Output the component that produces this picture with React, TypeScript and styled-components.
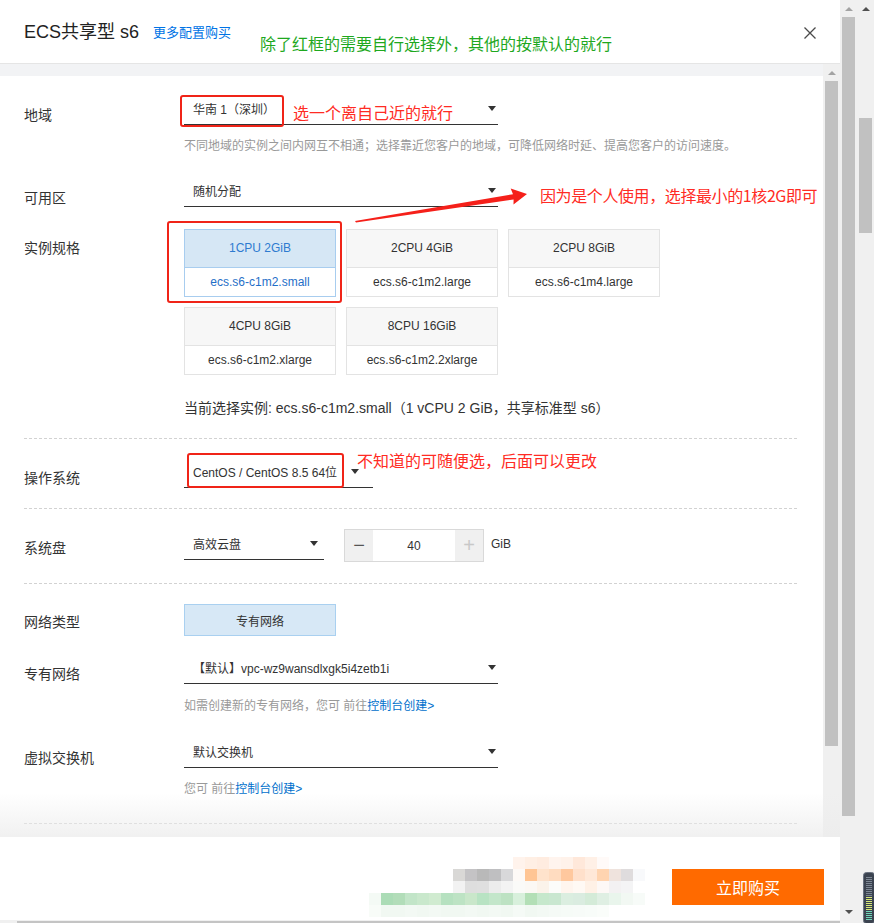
import React from 'react';
import styled, { createGlobalStyle } from 'styled-components';

const GlobalStyle = createGlobalStyle`
  html, body { margin: 0; padding: 0; background: #fff; }
  body {
    font-family: "Liberation Sans", "Noto Sans CJK SC", sans-serif;
    color: #333;
  }
  * { box-sizing: border-box; }
`;

const Page = styled.div`
  display: flex;
  width: 874px;
  height: 923px;
  overflow: hidden;
`;

const Modal = styled.div`
  width: 840px;
  height: 923px;
  display: flex;
  flex-direction: column;
  background: #fff;
`;

const Header = styled.header`
  height: 64px;
  flex-shrink: 0;
  display: flex;
  align-items: center;
  padding: 0 24px;
  border-bottom: 1px solid #e5e5e5;
`;

const Title = styled.h1`
  margin: 0;
  font-size: 18px;
  font-weight: normal;
  color: #222;
  line-height: 1;
`;

const HeaderLink = styled.a`
  margin-left: 14px;
  font-size: 13px;
  color: #0073e5;
  text-decoration: none;
`;

const GreenNote = styled.span`
  margin-left: 29px;
  transform: translateY(11px);
  font-family: "Noto Sans CJK SC", sans-serif;
  font-size: 16px;
  color: #1ea81e;
  white-space: nowrap;
`;

const CloseButton = styled.button`
  margin-left: auto;
  width: 12px;
  height: 12px;
  padding: 0;
  border: 0;
  background: none;
  display: flex;
  transform: translateY(1px);
`;

const Body = styled.div`
  position: relative;
  height: 773px;
  display: flex;
`;

const BodyMain = styled.div`
  flex: 1;
  display: flex;
  flex-direction: column;
  background: #f2f3f5;
  padding-top: 12px;
`;

const Content = styled.div`
  flex: 1;
  background: #fff;
  overflow: hidden;
  padding: 17px 25px 0 24px;
`;

const Fade = styled.div`
  position: absolute;
  left: 0;
  right: 0;
  bottom: 0;
  height: 44px;
  pointer-events: none;
  background: linear-gradient(rgba(240, 240, 240, 0), rgba(236, 236, 236, 0.75));
`;

const Row = styled.div<{ $mt: number }>`
  display: grid;
  grid-template-columns: 160px 1fr;
  margin-top: ${p => p.$mt}px;
`;

const Label = styled.div<{ $pt: number }>`
  padding-top: ${p => p.$pt}px;
  font-size: 14px;
  line-height: 20px;
  color: #333;
`;

const Field = styled.div<{ $row?: boolean }>`
  position: relative;
  display: flex;
  flex-direction: ${p => (p.$row ? 'row' : 'column')};
  align-items: flex-start;
`;

const Select = styled.div<{ $w: number; $cr: number }>`
  width: ${p => p.$w}px;
  height: 32px;
  display: flex;
  align-items: center;
  padding: 0 ${p => p.$cr}px 1px 9px;
  border-bottom: 1px solid #333;
  font-size: 12px;
  color: #333;
  white-space: nowrap;
`;

const Caret = styled.span`
  margin-left: auto;
  width: 0;
  height: 0;
  border-left: 4px solid transparent;
  border-right: 4px solid transparent;
  border-top: 5px solid #333;
`;

const Help = styled.div<{ $mt: number }>`
  margin-top: ${p => p.$mt}px;
  font-size: 12px;
  line-height: 18px;
  color: #999;
  white-space: nowrap;
`;

const HelpLink = styled.a`
  color: #0070cc;
  text-decoration: none;
`;

const RedBox = styled.div<{ $l: number; $t: number; $w: number; $h: number }>`
  position: absolute;
  left: ${p => p.$l}px;
  top: ${p => p.$t}px;
  width: ${p => p.$w}px;
  height: ${p => p.$h}px;
  border: 2.5px solid #f02418;
  border-radius: 3px;
  pointer-events: none;
`;

const Note = styled.span<{ $l: number; $t: number; $tight?: boolean }>`
  position: absolute;
  left: ${p => p.$l}px;
  top: ${p => p.$t}px;
  font-family: "Noto Sans CJK SC", sans-serif;
  font-size: 16px;
  line-height: 22px;
  letter-spacing: ${p => (p.$tight ? '-0.4px' : '0')};
  color: #ff2b24;
  white-space: nowrap;
`;

const ArrowSvg = styled.svg`
  position: absolute;
  left: 166px;
  top: 5px;
  overflow: visible;
`;

const CardGrid = styled.div`
  display: grid;
  grid-template-columns: repeat(3, 152px);
  gap: 10px;
`;

const Card = styled.div<{ $on?: boolean }>`
  height: 68px;
  border: 1px solid ${p => (p.$on ? '#a8cdef' : '#e3e3e3')};
  display: flex;
  flex-direction: column;
  font-size: 12px;
  text-align: center;
`;

const CardTop = styled.div<{ $on?: boolean }>`
  height: 38px;
  line-height: 37px;
  border-bottom: 1px solid ${p => (p.$on ? '#a8cdef' : '#e3e3e3')};
  background: ${p => (p.$on ? '#d6e7f5' : '#f7f7f7')};
  color: ${p => (p.$on ? '#2e7bd0' : '#333')};
`;

const CardBottom = styled.div<{ $on?: boolean }>`
  flex: 1;
  line-height: 28px;
  background: #fff;
  color: ${p => (p.$on ? '#1f6fc8' : '#333')};
`;

const Current = styled.div`
  margin-top: 24px;
  font-size: 14px;
  line-height: 18px;
  color: #333;
  white-space: nowrap;
`;

const Separator = styled.div<{ $mt: number }>`
  margin-top: ${p => p.$mt}px;
  height: 1px;
  background: repeating-linear-gradient(90deg, #d2d2d2 0 3px, transparent 3px 5px);
`;

const NumberBox = styled.div`
  margin: 1px 0 0 20px;
  width: 140px;
  height: 33px;
  display: flex;
  border: 1px solid #d9d9d9;
`;

const StepButton = styled.span<{ $muted?: boolean }>`
  width: 28px;
  display: flex;
  align-items: center;
  justify-content: center;
  background: #f0f0f0;
  font-size: 20px;
  font-weight: 300;
  color: ${p => (p.$muted ? '#c8c8c8' : '#555')};
`;

const NumberValue = styled.span`
  flex: 1;
  display: flex;
  align-items: center;
  justify-content: center;
  font-size: 12px;
  color: #333;
`;

const Unit = styled.span`
  margin-left: 7px;
  line-height: 33px;
  font-size: 12px;
  color: #333;
`;

const ChoiceButton = styled.div`
  width: 152px;
  height: 32px;
  display: flex;
  align-items: center;
  justify-content: center;
  background: #d7e8f6;
  border: 1px solid #a9d0f0;
  font-size: 12px;
  color: #333;
`;

const Track = styled.div<{ $h?: number }>`
  width: 17px;
  height: ${p => (p.$h ? `${p.$h}px` : '100%')};
  flex-shrink: 0;
  display: flex;
  flex-direction: column;
  align-items: center;
  background: #f0f0f0;
`;

const ArrowBox = styled.div<{ $bottom?: boolean }>`
  width: 17px;
  height: 17px;
  flex-shrink: 0;
  display: flex;
  align-items: center;
  justify-content: center;
  ${p => (p.$bottom ? 'margin-top: auto; margin-bottom: 3px;' : '')}
`;

const Tri = styled.span<{ $down?: boolean; $dark?: boolean }>`
  width: 0;
  height: 0;
  border-left: 4px solid transparent;
  border-right: 4px solid transparent;
  ${p => (p.$down ? 'border-top' : 'border-bottom')}: 4px solid ${p => (p.$dark ? '#505050' : '#a3a3a3')};
`;

const Thumb = styled.div<{ $mt: number; $h: number }>`
  margin-top: ${p => p.$mt}px;
  width: 13px;
  height: ${p => p.$h}px;
  flex-shrink: 0;
  background: #c1c1c1;
`;

const Widget = styled.svg`
  margin-top: auto;
  align-self: flex-end;
`;

const Footer = styled.footer`
  height: 83px;
  flex-shrink: 0;
  display: flex;
  justify-content: flex-end;
  align-items: flex-start;
  padding: 20px 16px 0 0;
  background: #fff;
`;

const Mosaic = styled.div`
  display: grid;
  grid-template-columns: repeat(23, 12px);
  grid-auto-rows: 12px;
`;

const Cell = styled.span<{ $c: string }>`
  background: ${p => p.$c || 'transparent'};
`;

const BuyButton = styled.button`
  margin: 12px 0 0 27px;
  width: 152px;
  height: 36px;
  border: 0;
  background: #ff6a00;
  color: #fff;
  font-family: "Noto Sans CJK SC", sans-serif;
  font-size: 16px;
`;

const HScroll = styled.div`
  height: 3px;
  flex-shrink: 0;
  background: #f0f0f0;
  padding: 1px 0 0 17px;
`;

const HThumb = styled.div`
  height: 2px;
  background: #c4c4c4;
`;

const e = '';
const mosaic: string[][] = [
  [e, e, e, e, e, e, e, e, e, e, e, e, '#fff3ec', '#ffefe4', '#ffece0', '#fff4ee', '#fff2ea', '#ffe8da', '#fff0e6', '#fffaf8', e, e, e],
  [e, e, e, e, e, e, e, '#d9d8d6', '#c4c3c5', '#b9b9b9', '#bfbfc1', '#d8d8da', '#fdf9f6', '#ffc594', '#ffe3cc', '#ffdcc0', '#ffc89e', '#ffe0cb', '#ffe8d8', '#ffd4b0', '#efe3dd', '#dfdcdd', '#f8f9fb'],
  [e, e, e, e, e, e, e, '#f2f2f2', '#dedede', '#dfdfdf', '#ececec', '#f3f3f3', '#fafaf8', '#fbf8f4', '#fbf3ea', '#fcfcfa', '#fff5ee', '#fff9f4', '#fff1e6', '#fdf8f6', '#f3f1f2', '#f4f4f5', e],
  ['#f4faf5', '#abdcb6', '#b2ddb9', '#c2e5c8', '#c9e8cc', '#d0ebd0', '#b6e1c0', '#bde3c4', '#c9e7ca', '#b8e3c3', '#c3e6ca', '#bde2c3', '#d8f0dc', '#b3dfb6', '#c6e8cc', '#c9e7d0', '#dbeee0', '#daece0', '#d4ebd8', '#dfefe3', '#e9f5ec', '#f2f8f3', '#f7fbf8'],
  ['#f8fcf8', '#f1f8f2', '#f1f8f2', '#f3f9f4', '#f1f8f2', '#f3f9f4', '#f1f8f2', '#f1f8f2', '#f3f9f4', '#f1f8f2', '#f3f9f4', '#f1f8f2', '#f5faf6', '#f1f8f2', '#f3f9f4', '#f5faf6', '#f6fbf7', '#f7fbf8', '#f8fcf9', '#fafdfa', e, e, e],
];

const specs = [
  { title: '1CPU 2GiB', name: 'ecs.s6-c1m2.small', on: true },
  { title: '2CPU 4GiB', name: 'ecs.s6-c1m2.large' },
  { title: '2CPU 8GiB', name: 'ecs.s6-c1m4.large' },
  { title: '4CPU 8GiB', name: 'ecs.s6-c1m2.xlarge' },
  { title: '8CPU 16GiB', name: 'ecs.s6-c1m2.2xlarge' },
];

const meterColor = (i: number) => (i < 10 ? '#7d8794' : i < 17 ? '#d6e878' : '#6fd6b8');

export default function App() {
  return (
    <>
      <GlobalStyle />
      <Page>
        <Modal>
          <Header>
            <Title>ECS共享型 s6</Title>
            <HeaderLink>更多配置购买</HeaderLink>
            <GreenNote>除了红框的需要自行选择外，其他的按默认的就行</GreenNote>
            <CloseButton aria-label="close">
              <svg width="12" height="12" viewBox="0 0 12 12">
                <path d="M0.5 0.5 L11.5 11.5 M11.5 0.5 L0.5 11.5" stroke="#4a4a4a" strokeWidth="1.3" fill="none" />
              </svg>
            </CloseButton>
          </Header>

          <Body>
            <BodyMain>
              <Content>
                <Row $mt={0}>
                  <Label $pt={12}>地域</Label>
                  <Field>
                    <Select $w={314} $cr={2}>
                      华南 1（深圳）
                      <Caret />
                    </Select>
                    <RedBox $l={-4} $t={2} $w={104} $h={32} />
                    <Note $l={109} $t={8}>选一个离自己近的就行</Note>
                    <Help $mt={12}>
                      不同地域的实例之间内网互不相通；选择靠近您客户的地域，可降低网络时延、提高您客户的访问速度。
                    </Help>
                  </Field>
                </Row>

                <Row $mt={20}>
                  <Label $pt={13}>可用区</Label>
                  <Field>
                    <Select $w={314} $cr={2}>
                      随机分配
                      <Caret />
                    </Select>
                    <ArrowSvg width="185" height="50" viewBox="0 0 185 50">
                      <polygon
                        points="5,41 163,14.2 160.7,8.4 177,14 163.5,24.6 163.6,19.4 6,42.6"
                        fill="#f5201a"
                      />
                    </ArrowSvg>
                    <Note $l={356} $t={9} $tight>因为是个人使用，选择最小的1核2G即可</Note>
                  </Field>
                </Row>

                <Row $mt={21}>
                  <Label $pt={9}>实例规格</Label>
                  <Field>
                    <CardGrid>
                      {specs.map(s => (
                        <Card key={s.name} $on={s.on}>
                          <CardTop $on={s.on}>{s.title}</CardTop>
                          <CardBottom $on={s.on}>{s.name}</CardBottom>
                        </Card>
                      ))}
                    </CardGrid>
                    <RedBox $l={-17} $t={-8} $w={175} $h={82} />
                    <Current>当前选择实例: ecs.s6-c1m2.small（1 vCPU 2 GiB，共享标准型 s6）</Current>
                  </Field>
                </Row>

                <Separator $mt={21} />

                <Row $mt={17}>
                  <Label $pt={12}>操作系统</Label>
                  <Field>
                    <Select $w={189} $cr={14}>
                      CentOS / CentOS 8.5 64位
                      <Caret />
                    </Select>
                    <RedBox $l={3} $t={-3} $w={157} $h={35} />
                    <Note $l={173} $t={-7}>不知道的可随便选，后面可以更改</Note>
                  </Field>
                </Row>

                <Separator $mt={20} />

                <Row $mt={19}>
                  <Label $pt={10}>系统盘</Label>
                  <Field $row>
                    <Select $w={140} $cr={6}>
                      高效云盘
                      <Caret />
                    </Select>
                    <NumberBox>
                      <StepButton>−</StepButton>
                      <NumberValue>40</NumberValue>
                      <StepButton $muted>+</StepButton>
                    </NumberBox>
                    <Unit>GiB</Unit>
                  </Field>
                </Row>

                <Separator $mt={21} />

                <Row $mt={20}>
                  <Label $pt={8}>网络类型</Label>
                  <Field>
                    <ChoiceButton>专有网络</ChoiceButton>
                  </Field>
                </Row>

                <Row $mt={16}>
                  <Label $pt={12}>专有网络</Label>
                  <Field>
                    <Select $w={314} $cr={2}>
                      【默认】vpc-wz9wansdlxgk5i4zetb1i
                      <Caret />
                    </Select>
                    <Help $mt={13}>
                      如需创建新的专有网络，您可 前往<HelpLink>控制台创建&gt;</HelpLink>
                    </Help>
                  </Field>
                </Row>

                <Row $mt={21}>
                  <Label $pt={12}>虚拟交换机</Label>
                  <Field>
                    <Select $w={314} $cr={2}>
                      默认交换机
                      <Caret />
                    </Select>
                    <Help $mt={12}>
                      您可 前往<HelpLink>控制台创建&gt;</HelpLink>
                    </Help>
                  </Field>
                </Row>

                <Separator $mt={25} />
              </Content>
            </BodyMain>
            <Track>
              <ArrowBox>
                <Tri />
              </ArrowBox>
              <Thumb $mt={0} $h={665} />
            </Track>
            <Fade />
          </Body>

          <Footer>
            <Mosaic>
              {mosaic.map((row, r) => row.map((c, i) => <Cell key={`${r}-${i}`} $c={c} />))}
            </Mosaic>
            <BuyButton>立即购买</BuyButton>
          </Footer>
          <HScroll>
            <HThumb />
          </HScroll>
        </Modal>

        <Track $h={923}>
          <ArrowBox>
            <Tri />
          </ArrowBox>
          <Thumb $mt={0} $h={799} />
          <ArrowBox $bottom>
            <Tri $down $dark />
          </ArrowBox>
        </Track>

        <Track $h={923}>
          <ArrowBox>
            <Tri $dark />
          </ArrowBox>
          <Thumb $mt={101} $h={115} />
          <Widget width="11" height="51" viewBox="0 0 11 51">
            <rect x="0.5" y="0.5" width="11" height="51" rx="3" fill="#3b4350" stroke="#6a7280" />
            {Array.from({ length: 22 }).map((_, i) => (
              <rect key={i} x="3" y={5 + i * 2} width="6" height="1" fill={meterColor(i)} />
            ))}
          </Widget>
        </Track>
      </Page>
    </>
  );
}
